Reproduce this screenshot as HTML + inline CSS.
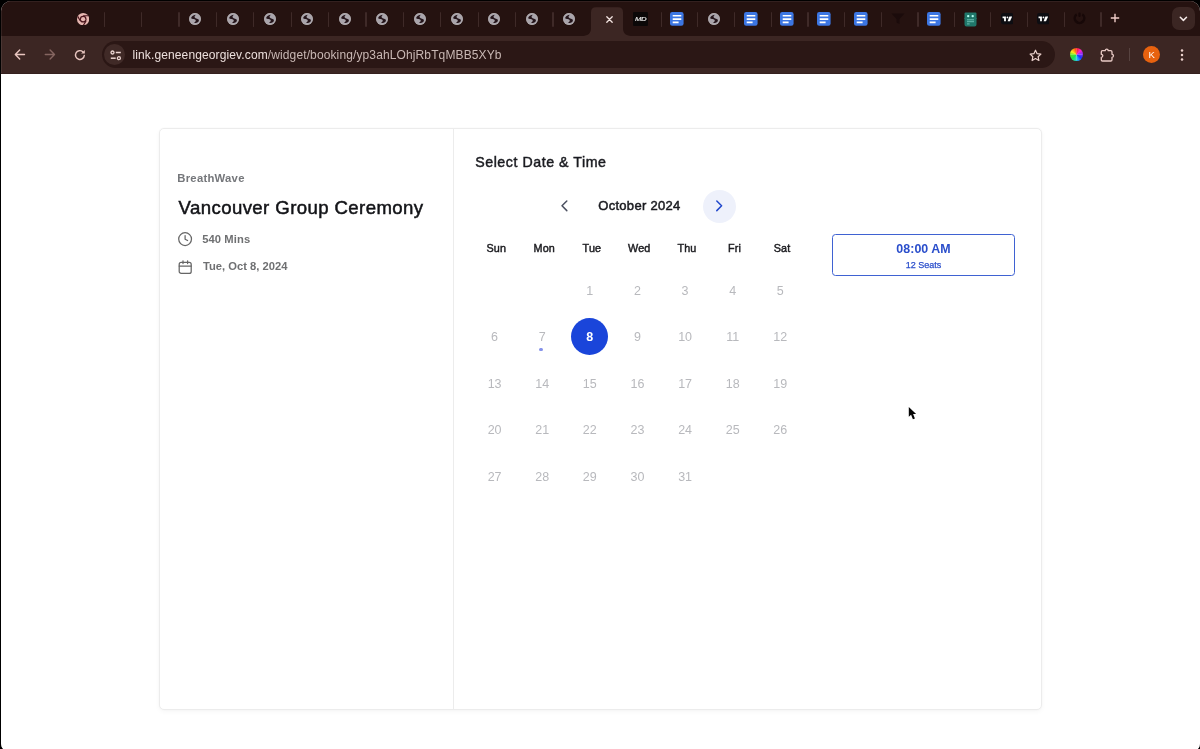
<!DOCTYPE html>
<html lang="en">
<head>
<meta charset="utf-8">
<title>Vancouver Group Ceremony</title>
<style>
*{box-sizing:border-box;margin:0;padding:0}
html,body{width:1200px;height:749px;overflow:hidden;background:#000;font-family:"Liberation Sans",sans-serif;}
.abs{position:absolute}
#win{position:absolute;left:1.200px;top:1.200px;width:1198.700px;height:751.800px;border-radius:10px;overflow:hidden;background:#fff}
#tabstrip{position:absolute;left:0;top:0;width:100%;height:35px;background:#251210;border-top:1px solid #33201f;box-shadow:inset 1px 0 0 rgba(255,255,255,.08)}
#toolbar{position:absolute;left:0;top:34.5px;width:100%;height:38.5px;background:#3c2623;border-bottom:1px solid #35201e;box-shadow:inset 1px 0 0 rgba(255,255,255,.08)}
#page{position:absolute;left:-0.200px;top:72.800px;width:1199px;height:680px;background:#fff}
.sep{position:absolute;top:12px;width:1.200px;height:14.500px;background:#3f2a28;border-radius:1px}
.tabico{position:absolute;top:10px;width:16px;height:16px}
#omni{position:absolute;left:100.5px;top:5.700px;width:953.300px;height:27px;border-radius:13.500px;background:#2b1715}
#url{position:absolute;left:132.500px;top:41.700px;height:27px;line-height:27px;font-size:12px;color:#ecdfdc;white-space:nowrap;letter-spacing:0.120px}
#url span{color:#c9b8b4}
/* card */
#card{position:absolute;left:158px;top:54px;width:883px;height:582px;border:1px solid #ececec;border-radius:5px;background:#fff;box-shadow:0 2px 5px rgba(0,0,0,.035),0 0 2px rgba(0,0,0,.03)}
#divider{position:absolute;left:293px;top:0;width:1px;height:100%;background:#ececec}
.t{position:absolute;white-space:nowrap;line-height:1}
.wd{position:absolute;width:48px;text-align:center;font-size:10.800px;color:#1c1c20;line-height:14px;-webkit-text-stroke:0.450px #1c1c20;letter-spacing:0.150px}
.d{position:absolute;width:37px;height:37px;line-height:39px;text-align:center;font-size:12.5px;color:#b8b9bd;border-radius:50%}
.d.sel{background:#1a45da;color:#fff;font-weight:bold}
</style>
</head>
<body>
<div id="win">
  <div id="tabstrip"></div>
  <div id="toolbar">
    <div id="omni"></div>
  </div>
  <div id="page">
    <div id="card">
      <div id="divider"></div>
    </div>
  </div>
</div>

<svg width="0" height="0" style="position:absolute">
<defs>
<symbol id="globe" viewBox="0 0 12 12"><circle cx="6" cy="6" r="5.900" fill="#a9a4ab"/><circle cx="6" cy="6" r="5.600" fill="none" stroke="#b9b1b4" stroke-width="0.600"/><path d="M2.100 5.300C2.300 3.600 4.200 2 6.600 1.800C6.300 2.800 5.200 3.400 5.600 4.200C6 5 7.200 5.200 8 5.800C8.800 6.200 9.600 6.400 9.900 6.900C9.900 8 9.400 8.800 8.800 9.300C7.800 10.100 6.200 10.200 5.100 9.700C5.800 9.200 6.800 8.600 6.800 7.800C6.800 6.800 5.600 6.400 4.600 6.100C3.600 5.900 2.600 5.900 2.100 5.300Z" fill="#24141a"/></symbol>
<symbol id="docs" viewBox="0 0 14 14"><rect x="0" y="0" width="13.600" height="13.800" rx="2.200" fill="#3c76e3"/><path d="M2.700 3.800h8.600M2.700 7.100h8.600M2.700 10.400h5.900" stroke="#fff" stroke-width="1.600" fill="none"/></symbol>
<symbol id="tv" viewBox="0 0 13 12"><rect x="0" y="0" width="13" height="12" rx="2.500" fill="#0d0d12"/><path d="M1.600 3.700h3.500v5h-1.900v-3.200h-1.600z" fill="#fff"/><circle cx="6.700" cy="4.600" r="0.950" fill="#fff"/><path d="M8.700 3.700h2.900l-2.200 5h-2.500z" fill="#fff"/></symbol>
</defs></svg>
<div id="L" style="position:absolute;left:0;top:0;width:1200px;height:749px;pointer-events:none;will-change:transform">
  <!-- chrome tabs -->
  <svg class="abs" style="left:576px;top:7px" width="62" height="29" viewBox="0 0 62 29"><path d="M7 29 C12 28.500 15 26.500 15 21 V5.200 Q15 0.300 20 0.300 H42 Q47 0.300 47 5.200 V21 C47 26.500 50 28.500 55 29 Z" fill="#3c2623"/></svg>
  <svg class="abs" style="left:604.500px;top:14.500px" width="9" height="9" viewBox="0 0 9 9"><path d="M1.800 1.800l5.400 5.400M7.200 1.800l-5.400 5.400" stroke="#f3e4e1" stroke-width="1.300" stroke-linecap="round"/></svg>
  <svg class="abs" id="chromeico" style="left:76.700px;top:13px" width="12.300" height="12.300" viewBox="0 0 12 12"><circle cx="6" cy="6" r="6" fill="#e6b6b0"/><circle cx="6" cy="6" r="3.300" fill="#4a151c"/><circle cx="6" cy="6" r="2.100" fill="#e6b6b0"/><path d="M6 2.700H11.200M3.150 7.650L0.700 3.300M8.850 7.650L6.200 12" stroke="#4a151c" stroke-width="1.100" fill="none"/></svg>
  <div class="sep" style="left:103.6px"></div>
  <div class="sep" style="left:141.0px"></div>
  <div class="sep" style="left:178.4px"></div>
  <div class="sep" style="left:215.8px"></div>
  <div class="sep" style="left:253.2px"></div>
  <div class="sep" style="left:290.6px"></div>
  <div class="sep" style="left:328.0px"></div>
  <div class="sep" style="left:365.4px"></div>
  <div class="sep" style="left:402.8px"></div>
  <div class="sep" style="left:440.2px"></div>
  <div class="sep" style="left:477.6px"></div>
  <div class="sep" style="left:515.0px"></div>
  <div class="sep" style="left:552.4px"></div>
  <div class="sep" style="left:660.6px"></div>
  <div class="sep" style="left:697.3px"></div>
  <div class="sep" style="left:734.1px"></div>
  <div class="sep" style="left:770.7px"></div>
  <div class="sep" style="left:807.4px"></div>
  <div class="sep" style="left:844.1px"></div>
  <div class="sep" style="left:880.9px"></div>
  <div class="sep" style="left:917.4px"></div>
  <div class="sep" style="left:953.7px"></div>
  <div class="sep" style="left:990.1px"></div>
  <div class="sep" style="left:1026.9px"></div>
  <div class="sep" style="left:1063.7px"></div>
  <div class="sep" style="left:1100.4px"></div>
  <svg class="abs" style="left:189.1px;top:13px" width="12" height="12"><use href="#globe"/></svg>
  <svg class="abs" style="left:226.5px;top:13px" width="12" height="12"><use href="#globe"/></svg>
  <svg class="abs" style="left:263.9px;top:13px" width="12" height="12"><use href="#globe"/></svg>
  <svg class="abs" style="left:301.3px;top:13px" width="12" height="12"><use href="#globe"/></svg>
  <svg class="abs" style="left:338.7px;top:13px" width="12" height="12"><use href="#globe"/></svg>
  <svg class="abs" style="left:376.1px;top:13px" width="12" height="12"><use href="#globe"/></svg>
  <svg class="abs" style="left:413.5px;top:13px" width="12" height="12"><use href="#globe"/></svg>
  <svg class="abs" style="left:450.9px;top:13px" width="12" height="12"><use href="#globe"/></svg>
  <svg class="abs" style="left:488.3px;top:13px" width="12" height="12"><use href="#globe"/></svg>
  <svg class="abs" style="left:525.7px;top:13px" width="12" height="12"><use href="#globe"/></svg>
  <svg class="abs" style="left:563.1px;top:13px" width="12" height="12"><use href="#globe"/></svg>
  <svg class="abs" style="left:707.9px;top:13px" width="12" height="12"><use href="#globe"/></svg>
  <svg class="abs" style="left:670.3px;top:12px" width="14" height="14"><use href="#docs"/></svg>
  <svg class="abs" style="left:743.8px;top:12px" width="14" height="14"><use href="#docs"/></svg>
  <svg class="abs" style="left:780.4px;top:12px" width="14" height="14"><use href="#docs"/></svg>
  <svg class="abs" style="left:817.1px;top:12px" width="14" height="14"><use href="#docs"/></svg>
  <svg class="abs" style="left:853.7px;top:12px" width="14" height="14"><use href="#docs"/></svg>
  <svg class="abs" style="left:927.1px;top:12px" width="14" height="14"><use href="#docs"/></svg>
  <svg class="abs" style="left:1000.5px;top:13px" width="12.500" height="11.500"><use href="#tv"/></svg>
  <svg class="abs" style="left:1036.9px;top:13px" width="12.500" height="11.500"><use href="#tv"/></svg>
  <div class="abs" id="mdico" style="left:633px;top:12px;width:15px;height:13.500px;background:#0b0808;border-radius:1px"></div>
  <div class="t" style="left:635px;top:17.200px;font-size:5.500px;font-style:italic;color:#e8e8e8;-webkit-text-stroke:0.150px #e8e8e8;letter-spacing:-0.300px;transform:scaleX(1.400);transform-origin:0 0">MD</div>
  <svg class="abs" id="funnel" style="left:890.500px;top:13px" width="14" height="12" viewBox="0 0 14 12"><path d="M0.500 0.500h13l-5 5.500v5l-3-1.500v-3.500z" fill="#1b0b0b"/></svg>
  <svg class="abs" id="greenico" style="left:964px;top:11.500px" width="13" height="15" viewBox="0 0 13 15"><path d="M1.500 0.500h10q1 0 1 1v4.200l.5.800-.5.800v5.200q0 2-2 2h-8q-2 0-2-2v-5.200l-.5-.8.500-.8v-4.200q0-1 1-1z" fill="#20776a"/><circle cx="4.200" cy="4.100" r="1.200" fill="#b4fff3"/><circle cx="8.700" cy="4.100" r="1.200" fill="#b4fff3"/><path d="M3 7.800h7M3 9.700h7M3 11.900h2.600" stroke="#74c6ba" stroke-width="0.900" fill="none"/></svg>
  <svg class="abs" id="darkico" style="left:1073px;top:12px" width="13" height="13" viewBox="0 0 13 13"><path d="M3.200 1.200a6 6 0 1 0 6.600 0l-1 2.300a3.500 3.500 0 1 1-4.600 0z" fill="#170808"/><rect x="5.400" y="0.500" width="2.200" height="4.500" rx="1" fill="#170808"/></svg>
  <svg class="abs" id="plus" style="left:1110px;top:13.300px" width="10" height="10" viewBox="0 0 10 10"><path d="M5 0.800v8.400M0.800 5h8.400" stroke="#f0cdc8" stroke-width="1.400" fill="none"/></svg>
  <div class="abs" style="left:1171.800px;top:7.200px;width:23.400px;height:22.800px;border-radius:7px;background:#3b2623"></div>
  <svg class="abs" style="left:1179px;top:15px" width="9" height="8" viewBox="0 0 9 8"><path d="M1.300 2.300l3.100 3.100 3.100-3.100" stroke="#f5ebe9" stroke-width="1.500" fill="none" stroke-linecap="round" stroke-linejoin="round"/></svg>

  <!-- toolbar icons -->
  <div id="url">link.geneengeorgiev.com<span>/widget/booking/yp3ahLOhjRbTqMBB5XYb</span></div>
  <svg class="abs" id="back" style="left:14px;top:49px" width="12" height="11" viewBox="0 0 12 11"><path d="M10.500 5.500H1.500M5.700 1.100L1.300 5.500l4.400 4.400" stroke="#e9c6c0" stroke-width="1.400" fill="none" stroke-linecap="round" stroke-linejoin="round"/></svg>
  <svg class="abs" id="fwd" style="left:43.500px;top:49px" width="12" height="11" viewBox="0 0 12 11"><path d="M1.300 5.500h9M6.100 1.100l4.400 4.400-4.400 4.400" stroke="#856560" stroke-width="1.400" fill="none" stroke-linecap="round" stroke-linejoin="round"/></svg>
  <svg class="abs" id="reload" style="left:73.800px;top:48.600px" width="12" height="12" viewBox="0 0 12 12"><path d="M10.300 6.400a4.400 4.400 0 1 1-1.500-3.700" stroke="#e9c6c0" stroke-width="1.400" fill="none" stroke-linecap="round"/><path d="M10.800 0.900v3.700h-3.700z" fill="#e9c6c0"/></svg>
  <div class="abs" id="siteinfo" style="left:104px;top:43.600px;width:21.400px;height:21.400px;border-radius:50%;background:#402a27"></div>
  <svg class="abs" id="tune" style="left:109.700px;top:49.500px" width="12" height="11" viewBox="0 0 12 11"><circle cx="2.500" cy="2.500" r="1.500" stroke="#ecd6d2" stroke-width="1.300" fill="none"/><path d="M5.800 2.500h5" stroke="#ecd6d2" stroke-width="1.500"/><circle cx="8.900" cy="8.200" r="1.500" stroke="#ecd6d2" stroke-width="1.300" fill="none"/><path d="M0.800 8.200h4.900" stroke="#ecd6d2" stroke-width="1.500"/></svg>
  <svg class="abs" id="star" style="left:1028.700px;top:48.900px" width="13" height="13" viewBox="0 0 13 13"><path d="M6.500 1.200l1.600 3.500 3.800.4-2.800 2.600.8 3.800-3.400-1.900-3.400 1.900.8-3.800L1.100 5.100l3.800-.4z" stroke="#ecd3ce" stroke-width="1.200" fill="none" stroke-linejoin="round"/></svg>
  <div class="abs" id="wheel" style="left:1070.200px;top:48.200px;width:12.800px;height:12.800px;border-radius:50%;background:conic-gradient(from 0deg,#ff2222 0deg,#ff22cc 45deg,#8a2cf0 85deg,#1a30ff 125deg,#1fa8ff 165deg,#20d8b0 190deg,#20e050 225deg,#58e020 265deg,#ffe81f 300deg,#ff8a10 335deg,#ff2222 360deg)"></div>
  <svg class="abs" style="left:1070.200px;top:48.200px" width="12.800" height="12.800" viewBox="0 0 12.800 12.800"><path d="M0.500 6.400h11.800M6.400 0.500v11.800" stroke="#fff" stroke-opacity="0.450" stroke-width="0.600"/></svg>
  <svg class="abs" id="puzzle" style="left:1100px;top:46.500px" width="15" height="15" viewBox="0 0 15 15"><path d="M1.300 4.900Q1.300 3.700 2.500 3.700H5.200A1.500 1.500 0 0 1 8.200 3.700H10.800Q12 3.700 12 4.900V7.300A1.500 1.500 0 0 1 12 10.300V12.800Q12 14 10.800 14H2.500Q1.300 14 1.300 12.800V10.300A1.500 1.500 0 0 0 1.300 7.300Z" stroke="#e9cbc6" stroke-width="1.300" fill="none" stroke-linejoin="round"/></svg>
  <div class="abs" style="left:1128.700px;top:48px;width:1px;height:13px;background:#574340"></div>
  <div class="abs" id="avatar" style="left:1143px;top:46.200px;width:17.200px;height:17.200px;border-radius:50%;background:#e8620f"></div>
  <div class="t" style="left:1143px;width:17.200px;text-align:center;top:50.300px;font-size:9.500px;color:#fff">K</div>
  <svg class="abs" id="menu" style="left:1179.500px;top:49px" width="4" height="12" viewBox="0 0 4 12"><circle cx="2" cy="1.500" r="1.250" fill="#ecd3ce"/><circle cx="2" cy="6" r="1.250" fill="#ecd3ce"/><circle cx="2" cy="10.500" r="1.250" fill="#ecd3ce"/></svg>
  <!-- left panel -->
  <div class="t" id="brand" style="left:177.300px;top:173.300px;font-size:11.300px;font-weight:bold;color:#75777b;letter-spacing:0.250px">BreathWave</div>
  <div class="t" id="title" style="left:178.600px;top:198.900px;font-size:18.600px;color:#121317;-webkit-text-stroke:0.500px #121317;letter-spacing:0.400px">Vancouver Group Ceremony</div>
  <svg class="abs" id="ico-clock" style="left:177px;top:230.900px" width="16" height="16" viewBox="0 0 16 16" fill="none" stroke="#666" stroke-width="1.25" stroke-linecap="round" stroke-linejoin="round"><circle cx="8.100" cy="8.100" r="6.400"/><path d="M8.100 4.600v3.600l2.500 1.300"/></svg>
  <div class="t" id="mins" style="left:202.200px;top:233.500px;font-size:11.200px;font-weight:bold;color:#6f7072;letter-spacing:0.100px">540 Mins</div>
  <svg class="abs" id="ico-cal" style="left:177px;top:259px" width="16" height="16" viewBox="0 0 16 16" fill="none" stroke="#666" stroke-width="1.25" stroke-linecap="round" stroke-linejoin="round"><rect x="2.2" y="3.4" width="12" height="11" rx="2"/><path d="M2.2 7.1h12M6 1.8v2.8M10.6 1.8v2.8"/></svg>
  <div class="t" id="date" style="left:203px;top:261px;font-size:11.2px;font-weight:bold;color:#6f7072">Tue, Oct 8, 2024</div>

  <!-- right panel -->
  <div class="t" id="sel" style="left:475.200px;top:154.500px;font-size:14.200px;color:#1a1b20;-webkit-text-stroke:0.450px #1a1b20;letter-spacing:0.550px">Select Date &amp; Time</div>
  <svg class="abs" id="prev" style="left:558px;top:199px" width="12" height="14" viewBox="0 0 12 14" fill="none" stroke="#4b5060" stroke-width="1.5" stroke-linecap="round" stroke-linejoin="round"><path d="M8.8 2L4 6.8l4.8 4.8"/></svg>
  <div class="t" id="month" style="left:598.300px;top:198.800px;font-size:13px;color:#1a1b20;-webkit-text-stroke:0.500px #1a1b20;letter-spacing:0.280px">October 2024</div>
  <div class="abs" id="nextbg" style="left:703px;top:189.5px;width:33px;height:33px;border-radius:50%;background:#eef1fb"></div>
  <svg class="abs" id="next" style="left:713px;top:199px" width="12" height="14" viewBox="0 0 12 14" fill="none" stroke="#2047cc" stroke-width="1.5" stroke-linecap="round" stroke-linejoin="round"><path d="M3.8 2l4.8 4.8-4.8 4.8"/></svg>
  <div class="wd" style="left:472.3px;top:240.5px">Sun</div>
  <div class="wd" style="left:520.3px;top:240.5px">Mon</div>
  <div class="wd" style="left:567.9px;top:240.5px">Tue</div>
  <div class="wd" style="left:615.3px;top:240.5px">Wed</div>
  <div class="wd" style="left:663.0px;top:240.5px">Thu</div>
  <div class="wd" style="left:710.5px;top:240.5px">Fri</div>
  <div class="wd" style="left:758.0px;top:240.5px">Sat</div>
  <div class="d" style="left:571.3px;top:271.8px">1</div>
  <div class="d" style="left:619.0px;top:271.8px">2</div>
  <div class="d" style="left:666.6px;top:271.8px">3</div>
  <div class="d" style="left:714.2px;top:271.8px">4</div>
  <div class="d" style="left:761.8px;top:271.8px">5</div>
  <div class="d" style="left:476.1px;top:318.3px">6</div>
  <div class="d" style="left:523.7px;top:318.3px">7</div>
  <div class="d sel" style="left:571.3px;top:318.3px">8</div>
  <div class="d" style="left:619.0px;top:318.3px">9</div>
  <div class="d" style="left:666.6px;top:318.3px">10</div>
  <div class="d" style="left:714.2px;top:318.3px">11</div>
  <div class="d" style="left:761.8px;top:318.3px">12</div>
  <div class="d" style="left:476.1px;top:364.7px">13</div>
  <div class="d" style="left:523.7px;top:364.7px">14</div>
  <div class="d" style="left:571.3px;top:364.7px">15</div>
  <div class="d" style="left:619.0px;top:364.7px">16</div>
  <div class="d" style="left:666.6px;top:364.7px">17</div>
  <div class="d" style="left:714.2px;top:364.7px">18</div>
  <div class="d" style="left:761.8px;top:364.7px">19</div>
  <div class="d" style="left:476.1px;top:411.3px">20</div>
  <div class="d" style="left:523.7px;top:411.3px">21</div>
  <div class="d" style="left:571.3px;top:411.3px">22</div>
  <div class="d" style="left:619.0px;top:411.3px">23</div>
  <div class="d" style="left:666.6px;top:411.3px">24</div>
  <div class="d" style="left:714.2px;top:411.3px">25</div>
  <div class="d" style="left:761.8px;top:411.3px">26</div>
  <div class="d" style="left:476.1px;top:457.8px">27</div>
  <div class="d" style="left:523.7px;top:457.8px">28</div>
  <div class="d" style="left:571.3px;top:457.8px">29</div>
  <div class="d" style="left:619.0px;top:457.8px">30</div>
  <div class="d" style="left:666.6px;top:457.8px">31</div>
  <div class="abs" id="dot" style="left:539.2px;top:347.5px;width:3.6px;height:3.6px;border-radius:50%;background:#8592ea"></div>
  <div class="abs" id="slot" style="left:832px;top:234px;width:183px;height:41.500px;border:1px solid #3f62d2;border-radius:3.5px;background:#fff"></div>
  <div class="t" id="time" style="left:832px;width:183px;text-align:center;top:243px;font-size:12.4px;font-weight:bold;color:#2a4ecb;letter-spacing:0.05px">08:00 AM</div>
  <div class="t" id="seats" style="left:832px;width:183px;text-align:center;top:260.500px;font-size:9px;color:#2a4ecb;-webkit-text-stroke:0.250px #2a4ecb">12 Seats</div>
  <svg class="abs" id="cursor" style="left:905px;top:404px" width="16" height="22" viewBox="0 0 16 22"><path d="M3.800 3V12.700L6.100 10.700L7.900 15.300L9.900 14.500L8.100 10.100H11.100Z" fill="#050505" stroke="#fff" stroke-width="1" stroke-linejoin="round" paint-order="stroke"/></svg>
</div>
</body>
</html>
